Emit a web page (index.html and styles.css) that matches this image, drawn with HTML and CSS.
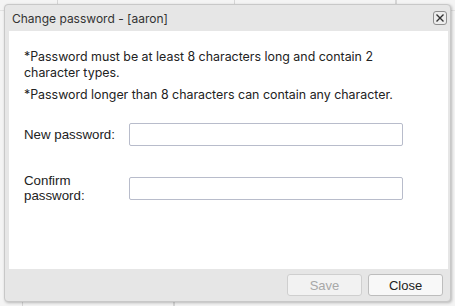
FILE: index.html
```html
<!DOCTYPE html>
<html>
    <head>
        <title>Change password</title>
        <link rel="stylesheet" href="styles.css">
    </head>
    <body>
        <div class="backdrop">
            <div class="grid-row top">
                <div class="cell" style="width: 57px"></div>
                <div class="cell" style="width: 176px"></div>
                <div class="cell" style="width: 160px"></div>
                <div class="cell"></div>
            </div>
            <div class="grid-row bottom">
                <div class="cell" style="width: 22px"></div>
                <div class="cell" style="width: 150px"></div>
                <div class="cell"></div>
            </div>
        </div>

        <div class="dialog">
            <div class="dialog-title">
                <span>Change password - [aaron]</span>
                <button class="close-x" title="Close">
                    <svg width="10" height="10" viewBox="0 0 10 10">
                        <path d="M1.5 1.5L8.5 8.5M8.5 1.5L1.5 8.5" stroke="#333" stroke-width="1.4" />
                    </svg>
                </button>
            </div>
            <div class="dialog-body">
                <p class="hint">*Password must be at least 8 characters long and contain 2 character types.</p>
                <p class="hint">*Password longer than 8 characters can contain any character.</p>
                <div class="field first">
                    <label>New password:</label>
                    <input type="password">
                </div>
                <div class="field">
                    <label>Confirm<br>password:</label>
                    <input type="password">
                </div>
            </div>
            <div class="dialog-footer">
                <button class="btn" disabled>Save</button>
                <button class="btn">Close</button>
            </div>
        </div>
    </body>
</html>
```

FILE: styles.css
```css
html, body {
    margin: 0;
    height: 100%;
}
body {
    background: #f4f4f4;
    font-family: "Liberation Sans", Arial, sans-serif;
    overflow: hidden;
}
.backdrop {
    height: 100%;
    display: flex;
    flex-direction: column;
    justify-content: space-between;
}
.grid-row {
    display: flex;
    height: 10px;
}
.grid-row.top {
    border-bottom: 1px solid #e2e2e2;
}
.cell {
    border-right: 1px solid #d6d6d6;
}

.dialog {
    position: absolute;
    top: 4px;
    left: 4px;
    width: 447px;
    height: 298px;
    background: #e6e6e6;
    border: 1px solid #c8c8c8;
    border-radius: 4px;
    box-shadow: 1px 1px 3px rgba(0, 0, 0, 0.25);
    display: flex;
    flex-direction: column;
    padding: 0 2px 0 4px;
    box-sizing: border-box;
}
.dialog-title {
    height: 26px;
    flex: none;
    display: flex;
    align-items: center;
    justify-content: space-between;
    padding: 0 1px 0 3px;
    font-family: Inter, "Noto Sans", sans-serif;
    font-size: 12px;
    color: #333;
}
.close-x {
    width: 14px;
    height: 14px;
    padding: 0;
    margin: 0;
    border: 1px solid #8f8f8f;
    border-radius: 3px;
    background: #ededed;
    display: flex;
    align-items: center;
    justify-content: center;
}
.dialog-body {
    flex: 1;
    background: #fff;
    padding: 18px 15px 0 15px;
}
.hint {
    max-width: 390px;
    margin: 0 0 6px 0;
    font-family: Inter, "Noto Sans", sans-serif;
    font-size: 12.4px;
    line-height: 16px;
    color: #222;
}
.field {
    display: flex;
    align-items: center;
    height: 24px;
    margin-top: 30px;
}
.field.first {
    margin-top: 19px;
}
.field label {
    width: 105px;
    font-size: 13.3px;
    line-height: 15px;
    color: #222;
}
.field input {
    width: 274px;
    height: 23px;
    box-sizing: border-box;
    border: 1px solid #b8bccb;
    border-radius: 2px;
    margin: 0;
}
.dialog-footer {
    height: 32px;
    flex: none;
    display: flex;
    justify-content: flex-end;
    align-items: center;
    gap: 6px;
    padding-right: 5px;
}
.btn {
    width: 75px;
    height: 22px;
    font-family: "Liberation Sans", Arial, sans-serif;
    font-size: 13px;
    color: #222;
    background: #f8f8f8;
    border: 1px solid #bdbdbd;
    border-radius: 3px;
}
.btn:disabled {
    color: #a8a8a8;
    background: #f2f2f2;
    border-color: #cfcfcf;
}
```
